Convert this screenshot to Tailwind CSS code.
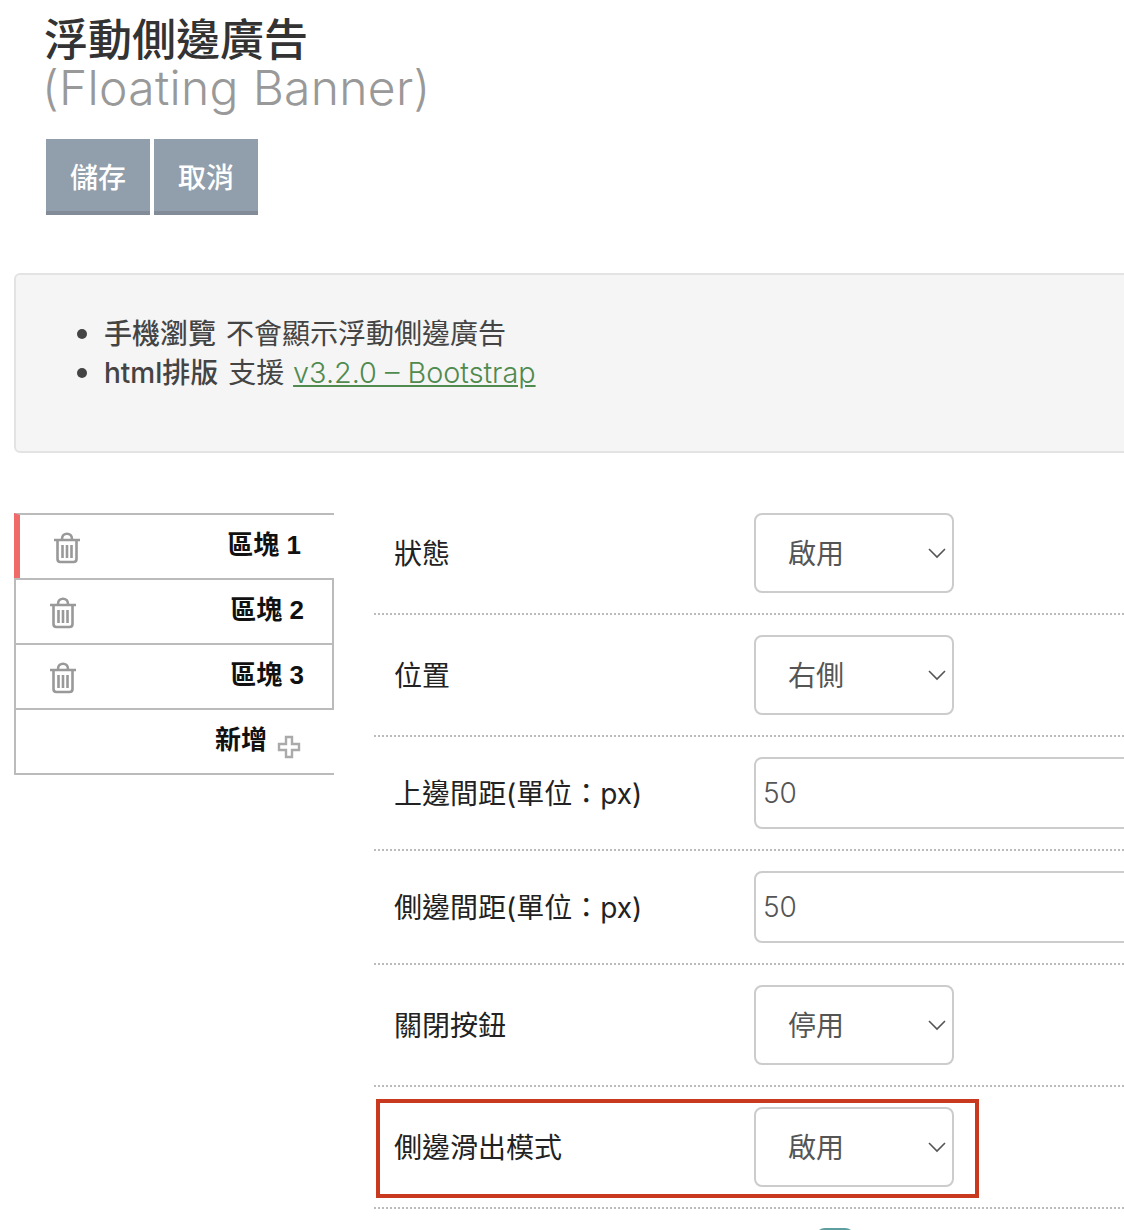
<!DOCTYPE html>
<html lang="zh-Hant">
<head>
  <meta charset="UTF-8" />
  <meta name="viewport" content="width=device-width, initial-scale=1.0"/>
  <title>浮動側邊廣告 (Floating Banner)</title>
  <script src="https://cdn.jsdelivr.net/npm/@tailwindcss/browser@4"></script>
</head>
<body class="bg-white">
  <div class="relative w-[1124px] h-[1230px] overflow-hidden font-['Inter','Noto_Sans_CJK_TC',sans-serif] text-[#333]">

    <!-- Title -->
    <header class="pl-[44px] pt-[17px]">
      <h1 class="text-[44px] leading-[47px] font-medium text-[#333]">浮動側邊廣告</h1>
      <p class="-ml-[2px] text-[48px] leading-[47px] tracking-[0.3px] font-light text-[#999]">(Floating Banner)</p>
    </header>

    <!-- Buttons -->
    <div class="flex gap-[4px] pl-[46px] mt-[28px]">
      <button class="w-[104px] h-[76px] pt-[6px] bg-[#919eab] border-b-4 border-[#818c98] text-white text-[28px] font-medium">儲存</button>
      <button class="w-[104px] h-[76px] pt-[6px] bg-[#919eab] border-b-4 border-[#818c98] text-white text-[28px] font-medium">取消</button>
    </div>

    <!-- Notes -->
    <div class="ml-[14px] mt-[58px] w-[1140px] h-[180px] bg-[#f5f5f5] border-2 border-[#e3e3e3] rounded-[6px] pt-[38px] pl-[66px] text-[28px] leading-[40px] text-[#444]">
      <ul class="list-disc pl-[22px] marker:text-[32px]">
        <li class="h-[39px]"><strong class="font-medium mr-[2px]">手機瀏覽</strong> 不會顯示浮動側邊廣告</li>
        <li><strong class="font-medium mr-[2px]">html排版</strong> 支援 <a href="#" class="ml-[1px] text-[28.800px] leading-none font-light text-[#4f8a4f] underline">v3.2.0 – Bootstrap</a></li>
      </ul>
    </div>

    <div class="flex mt-[60px]">
      <!-- Block list -->
      <div class="ml-[14px] w-[320px] shrink-0 text-[26px] font-bold text-[#111] font-['Liberation_Sans','Noto_Sans_CJK_TC',sans-serif]">
        <div class="flex items-center justify-between h-[65px] border-t-2 border-[#bbb] border-l-[6px] border-l-[#f06a6a] pl-[32px] pr-[33px]">
          <svg class="w-[30px] h-[32px] mt-[2px]" viewBox="0 0 30 32" fill="none" stroke="#999" stroke-width="2.600"><path d="M2 8h26M10 7c0-7 10-7 10 0M5.500 9v18c0 2 1 3 3 3h13c2 0 3-1 3-3V9M10.500 13v13M15 13v13M19.500 13v13"/></svg>
          <span class="-mt-[2px]">區塊 1</span>
        </div>
        <div class="flex items-center justify-between h-[65px] border-2 border-b-0 border-[#bbb] pl-[32px] pr-[28px]">
          <svg class="w-[30px] h-[32px] mt-[2px]" viewBox="0 0 30 32" fill="none" stroke="#999" stroke-width="2.600"><path d="M2 8h26M10 7c0-7 10-7 10 0M5.500 9v18c0 2 1 3 3 3h13c2 0 3-1 3-3V9M10.500 13v13M15 13v13M19.500 13v13"/></svg>
          <span class="-mt-[2px]">區塊 2</span>
        </div>
        <div class="flex items-center justify-between h-[65px] border-2 border-b-0 border-[#bbb] pl-[32px] pr-[28px]">
          <svg class="w-[30px] h-[32px] mt-[2px]" viewBox="0 0 30 32" fill="none" stroke="#999" stroke-width="2.600"><path d="M2 8h26M10 7c0-7 10-7 10 0M5.500 9v18c0 2 1 3 3 3h13c2 0 3-1 3-3V9M10.500 13v13M15 13v13M19.500 13v13"/></svg>
          <span class="-mt-[2px]">區塊 3</span>
        </div>
        <div class="flex items-center justify-end h-[67px] border-y-2 border-l-2 border-[#bbb] pr-[33px] gap-[10px]">
          <span class="-mt-[2px]">新增</span>
          <svg class="w-[24px] h-[24px] mt-[11px]" viewBox="0 0 24 24" fill="none" stroke="#aaa" stroke-width="2.400"><path d="M9 2h6v7h7v6h-7v7H9v-7H2V9h7z"/></svg>
        </div>
      </div>

      <!-- Settings form -->
      <div class="ml-[40px] flex-1 min-w-0 text-[28px] text-[#222]">
        <div class="flex items-center h-[102px] pb-[21px] border-b-2 border-dotted border-[#bbb]">
          <label class="w-[380px] pl-[20px] pt-[2px] shrink-0">狀態</label>
          <div class="relative w-[200px] h-[80px]">
            <select class="appearance-none w-full h-full pl-[32px] pt-[2px] bg-white border-2 border-[#ccc] rounded-[8px] text-[#555] text-[28px]"><option>啟用</option></select>
            <svg class="absolute right-[8px] top-[34px] w-[18px] h-[12px]" viewBox="0 0 18 12" fill="none" stroke="#555" stroke-width="1.600"><path d="M1 2l8 8 8-8"/></svg>
          </div>
        </div>
        <div class="flex items-center h-[122px] border-b-2 border-dotted border-[#bbb]">
          <label class="w-[380px] pl-[20px] pt-[2px] shrink-0">位置</label>
          <div class="relative w-[200px] h-[80px]">
            <select class="appearance-none w-full h-full pl-[32px] pt-[2px] bg-white border-2 border-[#ccc] rounded-[8px] text-[#555] text-[28px]"><option>右側</option></select>
            <svg class="absolute right-[8px] top-[34px] w-[18px] h-[12px]" viewBox="0 0 18 12" fill="none" stroke="#555" stroke-width="1.600"><path d="M1 2l8 8 8-8"/></svg>
          </div>
        </div>
        <div class="flex items-center h-[114px] border-b-2 border-dotted border-[#bbb]">
          <label class="w-[380px] pl-[20px] pt-[2px] shrink-0">上邊間距(單位：px)</label>
          <input value="50" class="w-[420px] shrink-0 h-[72px] pl-[7px] border-2 border-[#ccc] rounded-[8px] text-[#555] font-light" />
        </div>
        <div class="flex items-center h-[114px] border-b-2 border-dotted border-[#bbb]">
          <label class="w-[380px] pl-[20px] pt-[2px] shrink-0">側邊間距(單位：px)</label>
          <input value="50" class="w-[420px] shrink-0 h-[72px] pl-[7px] border-2 border-[#ccc] rounded-[8px] text-[#555] font-light" />
        </div>
        <div class="flex items-center h-[122px] border-b-2 border-dotted border-[#bbb]">
          <label class="w-[380px] pl-[20px] pt-[2px] shrink-0">關閉按鈕</label>
          <div class="relative w-[200px] h-[80px]">
            <select class="appearance-none w-full h-full pl-[32px] pt-[2px] bg-white border-2 border-[#ccc] rounded-[8px] text-[#555] text-[28px]"><option>停用</option></select>
            <svg class="absolute right-[8px] top-[34px] w-[18px] h-[12px]" viewBox="0 0 18 12" fill="none" stroke="#555" stroke-width="1.600"><path d="M1 2l8 8 8-8"/></svg>
          </div>
        </div>
        <div class="flex items-center h-[122px] border-b-2 border-dotted border-[#bbb]">
          <label class="w-[380px] pl-[20px] pt-[2px] shrink-0">側邊滑出模式</label>
          <div class="relative w-[200px] h-[80px]">
            <select class="appearance-none w-full h-full pl-[32px] pt-[2px] bg-white border-2 border-[#ccc] rounded-[8px] text-[#555] text-[28px]"><option>啟用</option></select>
            <svg class="absolute right-[8px] top-[34px] w-[18px] h-[12px]" viewBox="0 0 18 12" fill="none" stroke="#555" stroke-width="1.600"><path d="M1 2l8 8 8-8"/></svg>
          </div>
        </div>
      </div>
    </div>

    <!-- Highlight frame over the last row -->
    <div class="absolute left-[376px] top-[1099px] w-[603px] h-[99px] border-4 border-[#c9391f]"></div>
    <!-- Cut off element at the bottom edge -->
    <div class="absolute left-[815px] top-[1228px] w-[40px] h-[20px] rounded-full bg-[#5f9ea0]"></div>
  </div>
</body>
</html>
